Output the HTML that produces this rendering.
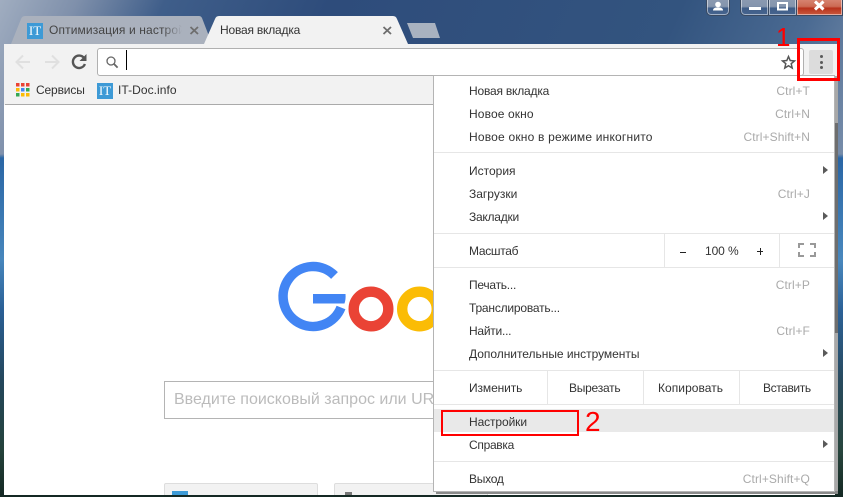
<!DOCTYPE html>
<html><head><meta charset="utf-8"><style>
html,body{margin:0;padding:0}
body{width:843px;height:497px;overflow:hidden;position:relative;font-family:"Liberation Sans",sans-serif;background:#2f5080}
#bg{position:absolute;left:0;top:0;width:843px;height:497px;background:linear-gradient(180deg,rgba(0,0,0,0) 0,rgba(0,0,0,0) 154px,rgba(38,100,165,.95) 158px,rgba(70,135,190,.95) 260px,rgba(40,95,150,.95) 310px,rgba(35,70,90,.95) 380px,rgba(35,65,55,.95) 450px,rgba(20,40,35,1) 497px),linear-gradient(115deg,#a0adc0 0,#7f90ab 70px,#3f5e8a 150px,#2e4c7b 300px,#33547f 620px,#4a6a92 740px,#7e92ad 843px)}
.a{position:absolute;white-space:nowrap}
.m{position:absolute;left:469px;font-size:12px;line-height:16px;color:#333;white-space:nowrap;letter-spacing:-.1px}
.s{position:absolute;right:33px;font-size:12px;line-height:16px;color:#aaa;white-space:nowrap;letter-spacing:.1px}
.l{position:absolute;background:#e6e6e6}
.arr{position:absolute;left:823px;width:0;height:0;border-left:5px solid #5a5a5a;border-top:4px solid transparent;border-bottom:4px solid transparent}
.wb{position:absolute;top:-3px;height:19px;box-sizing:border-box;border:1px solid #3a4a62;box-shadow:inset 0 0 0 1px rgba(255,255,255,.5);background:linear-gradient(180deg,#8c9bb2 0,#8595ad 50%,#3f5d88 60%,#46648e 100%)}
</style></head><body>
<div id="bg"></div>

<!-- window controls -->
<div class="wb" style="left:706px;width:24px;border-radius:0 0 5px 5px"></div>
<div class="wb" style="left:740px;width:29px;border-radius:0 0 0 5px"></div>
<div class="wb" style="left:768px;width:29px"></div>
<div class="wb" style="left:796px;width:47px;background:linear-gradient(180deg,#d98a78 0,#cc6a54 50%,#b8321c 60%,#c95a3e 100%)"></div>
<svg class="a" style="left:0;top:0" width="843" height="20">
<circle cx="718" cy="4.500" r="2.800" fill="#fff"/><path d="M713 10.500c0-2.500 2-3 5-3s5 .5 5 3z" fill="#fff"/>
<rect x="749" y="7" width="12" height="3" fill="#fff"/>
<rect x="778" y="3" width="9" height="6.500" fill="none" stroke="#fff" stroke-width="2"/>
<path d="M815 1.500l8.500 8M823.500 1.500l-8.500 8" stroke="#fff" stroke-width="3"/>
</svg>

<!-- tabs -->
<svg class="a" style="left:0;top:0" width="450" height="46">
<path d="M11 44L21 19q1-3 4-3H199q2 0 3 2L212 44z" fill="#aab1bd"/>
<path d="M407 23H435L440 38H413z" fill="#a9b2c0"/>
<path d="M204 44L215 19Q216 16 219 16H393Q396 16 397 19L408 44z" fill="#f2f2f2"/>
<path d="M190.500 27l7.500 7M198 27l-7.500 7M383.500 27l7.500 7M391 27l-7.500 7" stroke="#6e6e6e" stroke-width="1.800" fill="none"/>
</svg>
<div class="a" style="left:27px;top:23px;width:16px;height:16px;background:#3d9ad6;color:#fff;font:13px/16px 'Liberation Serif',serif;text-align:center">IT</div>
<div class="a" style="left:49px;top:22px;width:133px;overflow:hidden;font-size:12px;line-height:16px;color:#444;letter-spacing:.12px;-webkit-mask-image:linear-gradient(90deg,#000 85%,transparent)">Оптимизация и настройка</div>
<div class="a" style="left:220px;top:22px;font-size:12px;line-height:16px;color:#333;letter-spacing:-.2px">Новая вкладка</div>

<!-- toolbar -->
<div class="a" style="left:4px;top:44px;width:834px;height:61px;background:#f2f2f2"></div>
<div class="a" style="left:5px;top:104px;width:830px;height:1px;background:#aaa"></div>
<div class="a" style="left:97px;top:48px;width:707px;height:28px;box-sizing:border-box;background:#fff;border:1px solid #b0b0b0;border-radius:3px"></div>
<div class="a" style="left:126px;top:50px;width:1px;height:20px;background:#000"></div>
<svg class="a" style="left:0;top:44px" width="130" height="32">
<path d="M30 18H17M23 11.500l-6.500 6.500 6.500 6.500" fill="none" stroke="#e0e0e0" stroke-width="2"/>
<path d="M45 18H58M52 11.500l6.500 6.500-6.500 6.500" fill="none" stroke="#e0e0e0" stroke-width="2"/>
<path d="M84 14a6.200 6.200 0 1 0 .9 6" fill="none" stroke="#555" stroke-width="2.400"/>
<path d="M86.500 10v7h-7z" fill="#555"/>
<circle cx="111" cy="17" r="4" fill="none" stroke="#666" stroke-width="1.300"/>
<path d="M113.800 19.800l3.800 3.800" stroke="#666" stroke-width="1.800"/>
</svg>
<svg class="a" style="left:779px;top:50px" width="20" height="22">
<path d="M9.500 6.500l1.700 4 4.300.4-3.300 2.800 1 4.300-3.700-2.300-3.700 2.300 1-4.300-3.300-2.800 4.300-.4z" fill="none" stroke="#555" stroke-width="1.500"/>
</svg>
<div class="a" style="left:809px;top:50px;width:24px;height:24px;background:#dcdcdc;border-radius:2px"></div>
<div class="a" style="left:820px;top:55px;width:3px;height:3px;background:#5a5a5a;border-radius:50%;box-shadow:0 6px 0 #5a5a5a,0 11px 0 #5a5a5a"></div>

<!-- bookmarks -->
<svg class="a" style="left:16px;top:83px" width="14" height="14">
<rect x="0" y="0" width="3.500" height="3.500" fill="#ea4335"/><rect x="5" y="0" width="3.500" height="3.500" fill="#ea4335"/><rect x="10" y="0" width="3.500" height="3.500" fill="#ea4335"/>
<rect x="0" y="5" width="3.500" height="3.500" fill="#fbbc05"/><rect x="5" y="5" width="3.500" height="3.500" fill="#4285f4"/><rect x="10" y="5" width="3.500" height="3.500" fill="#34a853"/>
<rect x="0" y="10" width="3.500" height="3.500" fill="#34a853"/><rect x="5" y="10" width="3.500" height="3.500" fill="#fbbc05"/><rect x="10" y="10" width="3.500" height="3.500" fill="#fbbc05"/>
</svg>
<div class="a" style="left:36px;top:82px;font-size:12px;line-height:16px;color:#333;letter-spacing:-.15px">Сервисы</div>
<div class="a" style="left:97px;top:83px;width:16px;height:16px;background:#3d9ad6;color:#fff;font:13px/16px 'Liberation Serif',serif;text-align:center">IT</div>
<div class="a" style="left:118px;top:82px;font-size:12px;line-height:16px;color:#333;letter-spacing:.05px">IT-Doc.info</div>

<!-- page -->
<div class="a" style="left:4px;top:105px;width:831px;height:390px;background:#fff;overflow:hidden">
<svg class="a" style="left:0;top:0" width="831" height="390">
<g transform="translate(-4,-105)">
<path d="M334.500 275.500A30 30 0 1 0 341 307.500" fill="none" stroke="#4285f4" stroke-width="9.500"/>
<path d="M313 294H345.500Q346 299 344.500 303.500H313z" fill="#4285f4"/>
<circle cx="371" cy="309" r="17.300" fill="none" stroke="#ea4335" stroke-width="10.400"/>
<circle cx="419.500" cy="309" r="17.300" fill="none" stroke="#fbbc05" stroke-width="10.400"/>
</g></svg>
<div class="a" style="left:160px;top:276px;width:400px;height:38px;box-sizing:border-box;border:1px solid #b4b4b4"></div>
<div class="a" style="left:170px;top:285px;font-size:16px;line-height:20px;color:#bbb">Введите поисковый запрос или URL</div>
<div class="a" style="left:160px;top:378px;width:154px;height:20px;box-sizing:border-box;background:#f2f2f2;border:1px solid #ddd;border-radius:2px 2px 0 0"></div>
<div class="a" style="left:168px;top:386px;width:16px;height:8px;background:#3d9ad6"></div>
<div class="a" style="left:330px;top:378px;width:154px;height:20px;box-sizing:border-box;background:#f2f2f2;border:1px solid #ddd;border-radius:2px 2px 0 0"></div>
<div class="a" style="left:341px;top:387px;width:7px;height:6px;background:#777"></div>
</div>

<!-- menu -->
<div class="a" style="left:835px;top:76px;width:3px;height:418px;background:#a8a8a8"></div>
<div class="a" style="left:835px;top:123px;width:3px;height:210px;background:#6e6e6e"></div>
<div class="a" style="left:436px;top:491px;width:402px;height:3px;background:#8a8a8a"></div>
<div class="a" style="left:433px;top:75px;width:402px;height:417px;box-sizing:border-box;background:#fff;border:1px solid #b4b4b4"></div>
<div class="a" style="left:434px;top:409px;width:400px;height:23px;background:#e9e9e9"></div>
<div class="l" style="left:434px;top:152px;width:400px;height:1px"></div>
<div class="l" style="left:434px;top:233px;width:400px;height:1px"></div>
<div class="l" style="left:434px;top:267px;width:400px;height:1px"></div>
<div class="l" style="left:434px;top:370px;width:400px;height:1px"></div>
<div class="l" style="left:434px;top:404px;width:400px;height:1px"></div>
<div class="l" style="left:434px;top:461px;width:400px;height:1px"></div>
<div class="l" style="left:664px;top:233px;width:1px;height:34px"></div>
<div class="l" style="left:779px;top:233px;width:1px;height:34px"></div>
<div class="l" style="left:547px;top:370px;width:1px;height:34px"></div>
<div class="l" style="left:643px;top:370px;width:1px;height:34px"></div>
<div class="l" style="left:739px;top:370px;width:1px;height:34px"></div>

<div class="m" style="top:83px;letter-spacing:-.2px">Новая вкладка</div><div class="s" style="top:83px">Ctrl+T</div>
<div class="m" style="top:106px;letter-spacing:.12px">Новое окно</div><div class="s" style="top:106px">Ctrl+N</div>
<div class="m" style="top:129px;letter-spacing:.2px">Новое окно в режиме инкогнито</div><div class="s" style="top:129px">Ctrl+Shift+N</div>
<div class="m" style="top:163px;letter-spacing:0">История</div><div class="arr" style="top:166px"></div>
<div class="m" style="top:186px;letter-spacing:0">Загрузки</div><div class="s" style="top:186px">Ctrl+J</div>
<div class="m" style="top:209px;letter-spacing:-.25px">Закладки</div><div class="arr" style="top:212px"></div>
<div class="m" style="top:243px;letter-spacing:-.3px">Масштаб</div>
<div class="a" style="left:680px;top:252px;width:6px;height:1px;background:#222"></div>
<div class="a" style="left:705px;top:243px;font-size:12px;line-height:16px;color:#333;letter-spacing:-.1px">100 %</div>
<div class="a" style="left:757px;top:251px;width:6px;height:1px;background:#222"></div>
<div class="a" style="left:760px;top:248px;width:1px;height:7px;background:#222"></div>
<svg class="a" style="left:798px;top:243px" width="18" height="14"><path d="M1 5V1H6M12 1H17V5M17 9V13H12M6 13H1V9" fill="none" stroke="#999" stroke-width="2"/></svg>
<div class="m" style="top:277px;letter-spacing:-.25px">Печать...</div><div class="s" style="top:277px">Ctrl+P</div>
<div class="m" style="top:300px;letter-spacing:-.2px">Транслировать...</div>
<div class="m" style="top:323px;letter-spacing:-.25px">Найти...</div><div class="s" style="top:323px">Ctrl+F</div>
<div class="m" style="top:346px;letter-spacing:-.03px">Дополнительные инструменты</div><div class="arr" style="top:349px"></div>
<div class="m" style="top:380px">Изменить</div>
<div class="m" style="left:569px;top:380px;letter-spacing:-.25px">Вырезать</div>
<div class="m" style="left:658px;top:380px;letter-spacing:.05px">Копировать</div>
<div class="m" style="left:763px;top:380px;letter-spacing:-.4px">Вставить</div>
<div class="m" style="top:414px">Настройки</div>
<div class="m" style="top:437px;letter-spacing:-.3px">Справка</div><div class="arr" style="top:440px"></div>
<div class="m" style="top:471px;letter-spacing:-.25px">Выход</div><div class="s" style="top:471px">Ctrl+Shift+Q</div>

<!-- annotations -->
<div class="a" style="left:797px;top:38px;width:43px;height:43px;box-sizing:border-box;border:3px solid #f00"></div>
<div class="a" style="left:776px;top:24px;font-size:26px;line-height:26px;color:#f00">1</div>
<div class="a" style="left:441px;top:410px;width:138px;height:26px;box-sizing:border-box;border:2px solid #f00"></div>
<div class="a" style="left:585px;top:407px;font-size:28px;line-height:30px;color:#f00">2</div>
</body></html>
